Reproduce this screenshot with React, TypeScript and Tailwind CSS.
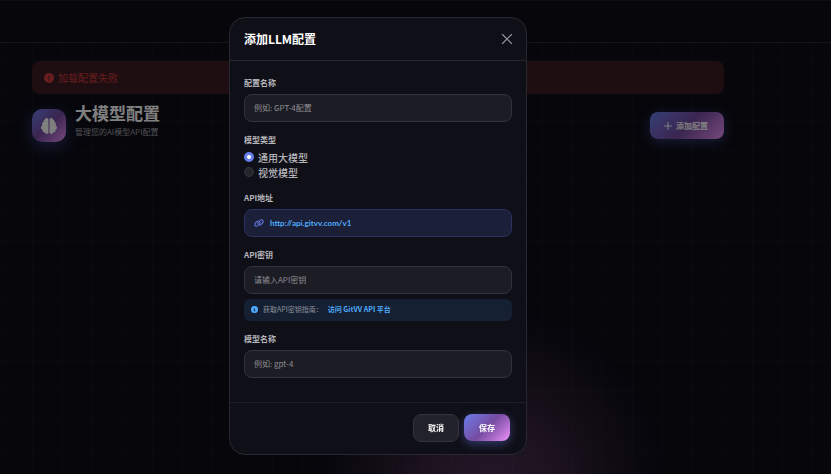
import React, { useState } from 'react';
import { FaBrain, FaCircleExclamation, FaCircleInfo, FaLink } from 'react-icons/fa6';
import { Plus, X } from 'lucide-react';

const fieldClass =
    'w-full h-7 rounded-lg border border-[#33333c] bg-[#1c1c24] px-[9px] text-[8px] text-white placeholder:text-[#8e8e94] outline-none focus:border-[#667eea]';
const labelClass = 'block text-[8px] leading-3 font-bold text-[#b5b5ba]';

const Backdrop: React.FC = () => (
    <div className="absolute inset-0 bg-[radial-gradient(circle_at_59%_102%,rgba(240,147,251,0.26)_0%,rgba(225,130,200,0.22)_60px,rgba(225,130,200,0.1)_115px,transparent_175px)]">
        <div className="h-full bg-[linear-gradient(rgba(255,255,255,0.025)_1px,transparent_1px),linear-gradient(90deg,rgba(255,255,255,0.025)_1px,transparent_1px)] bg-size-[30px_30px] bg-position-[2px_0px]" />
    </div>
);

const ConfigPage: React.FC<{ onAdd: () => void }> = ({ onAdd }) => (
    <div className="relative">
        <header className="h-[43px] border-t border-b border-t-[#1c1c22] border-b-[#2a2a32] bg-[#0d0d16]" />
        <main className="mx-8 mt-[18px] max-w-[692px]">
            <div className="flex h-[33px] items-center gap-1 rounded-lg bg-[#3e1c22] px-3 text-[10px] text-[#d03a3c]" role="alert">
                <FaCircleExclamation className="h-[10px] w-[10px]" />
                加载配置失败
            </div>
            <div className="mt-[7px] flex items-center justify-between">
                <div className="flex items-center gap-[9px]">
                    <div className="flex h-[33px] w-[34px] items-center justify-center rounded-[10px] bg-linear-135 from-[#667eea] via-[#764ba2] to-[#f093fb] shadow-[0_5px_16px_rgba(102,126,234,0.4)]">
                        <FaBrain className="h-4 w-4 text-white" />
                    </div>
                    <div className="pb-3">
                        <h1 className="text-[17px] leading-6 font-bold text-white">大模型配置</h1>
                        <p className="mt-px text-[8px] leading-3 text-[#a0a0a6]">管理您的AI模型API配置</p>
                    </div>
                </div>
                <button
                    type="button"
                    onClick={onAdd}
                    className="flex h-[27px] items-center gap-0.5 rounded-lg bg-linear-135 from-[#667eea] via-[#764ba2] to-[#f093fb] pr-4 pl-3 text-[8px] font-bold text-white shadow-[0_3px_12px_rgba(102,126,234,0.4)]"
                >
                    <Plus className="h-3 w-3" strokeWidth={2} />
                    添加配置
                </button>
            </div>
        </main>
    </div>
);

const Choice: React.FC<{ label: string; checked: boolean; onChange: () => void }> = ({ label, checked, onChange }) => (
    <label className="flex h-[15px] items-center gap-1 text-[10px] font-medium text-[#b5b5ba]">
        <input
            type="radio"
            name="modelType"
            checked={checked}
            onChange={onChange}
            className="h-[10px] w-[10px] appearance-none rounded-full border border-[#33333b] bg-[#25252c] checked:border-[3px] checked:border-[#667eea] checked:bg-white"
        />
        {label}
    </label>
);

const ConfigModal: React.FC<{ onClose: () => void }> = ({ onClose }) => {
    const [modelType, setModelType] = useState('general');

    return (
        <div className="fixed inset-0 bg-black/50">
            <div className="flex h-full max-w-[756px] items-center justify-center px-4 pb-[3px]">
                <form
                    role="dialog"
                    aria-labelledby="modal-title"
                    onSubmit={e => e.preventDefault()}
                    className="w-full max-w-[298px] rounded-2xl border border-[#282830] bg-[#0f0f17]"
                >
                    <div className="flex h-[43px] items-center justify-between border-b border-[#25252d] pr-[10px] pl-[14px]">
                        <h2 id="modal-title" className="text-xs font-bold text-white">添加LLM配置</h2>
                        <button type="button" aria-label="关闭" onClick={onClose} className="text-[#96969d]">
                            <X className="h-[18px] w-[18px]" strokeWidth={1.5} />
                        </button>
                    </div>

                    <div className="flex flex-col gap-3 px-[14px] pt-4 pb-6">
                        <div>
                            <label htmlFor="name" className={labelClass}>配置名称</label>
                            <input id="name" placeholder="例如: GPT-4配置" className={`${fieldClass} mt-[5px]`} />
                        </div>

                        <fieldset>
                            <legend className={`${labelClass} mb-1`}>模型类型</legend>
                            <Choice label="通用大模型" checked={modelType === 'general'} onChange={() => setModelType('general')} />
                            <Choice label="视觉模型" checked={modelType === 'vision'} onChange={() => setModelType('vision')} />
                        </fieldset>

                        <div>
                            <span className={labelClass}>API地址</span>
                            <div className="mt-[5px] flex h-7 items-center gap-[6px] rounded-lg border border-[#2b3260] bg-[#1c1f38] px-[9px]">
                                <FaLink className="h-[10px] w-[10px] text-[#667eea]" />
                                <a href="http://api.gitvv.com/v1" className="font-[Lato] text-[8px] font-bold text-[#4facfe]">http://api.gitvv.com/v1</a>
                            </div>
                        </div>

                        <div>
                            <label htmlFor="key" className={labelClass}>API密钥</label>
                            <input id="key" placeholder="请输入API密钥" className={`${fieldClass} mt-[5px]`} />
                            <div className="mt-[5px] flex h-[22px] items-center gap-[5px] rounded-md bg-[#152033] px-[7px] text-[7px] text-[#8d9198]">
                                <FaCircleInfo className="h-[7px] w-[7px] text-[#4facfe]" />
                                获取API密钥指南：
                                <a href="http://api.gitvv.com" className="font-bold text-[#4facfe]">访问 GitVV API 平台</a>
                            </div>
                        </div>

                        <div>
                            <label htmlFor="model" className={labelClass}>模型名称</label>
                            <input id="model" placeholder="例如: gpt-4" className={`${fieldClass} mt-[5px]`} />
                        </div>
                    </div>

                    <div className="flex items-center justify-end gap-[5px] border-t border-[#1e1e26] px-4 pt-[11px] pb-3">
                        <button type="button" onClick={onClose} className="h-7 rounded-lg border border-[#33333b] bg-[#22222a] px-[14px] text-[8px] font-bold text-white">
                            取消
                        </button>
                        <button type="submit" className="h-[27px] rounded-lg bg-linear-135 from-[#667eea] via-[#764ba2] to-[#f093fb] px-[15px] text-[8px] font-bold text-white shadow-[0_3px_10px_rgba(102,126,234,0.4)]">
                            保存
                        </button>
                    </div>
                </form>
            </div>
        </div>
    );
};

export default function App() {
    const [open, setOpen] = useState(true);

    return (
        <div className="relative min-h-screen bg-[#0c0c17] font-['Noto_Sans_CJK_SC',sans-serif]">
            <Backdrop />
            <ConfigPage onAdd={() => setOpen(true)} />
            {open && <ConfigModal onClose={() => setOpen(false)} />}
        </div>
    );
}
